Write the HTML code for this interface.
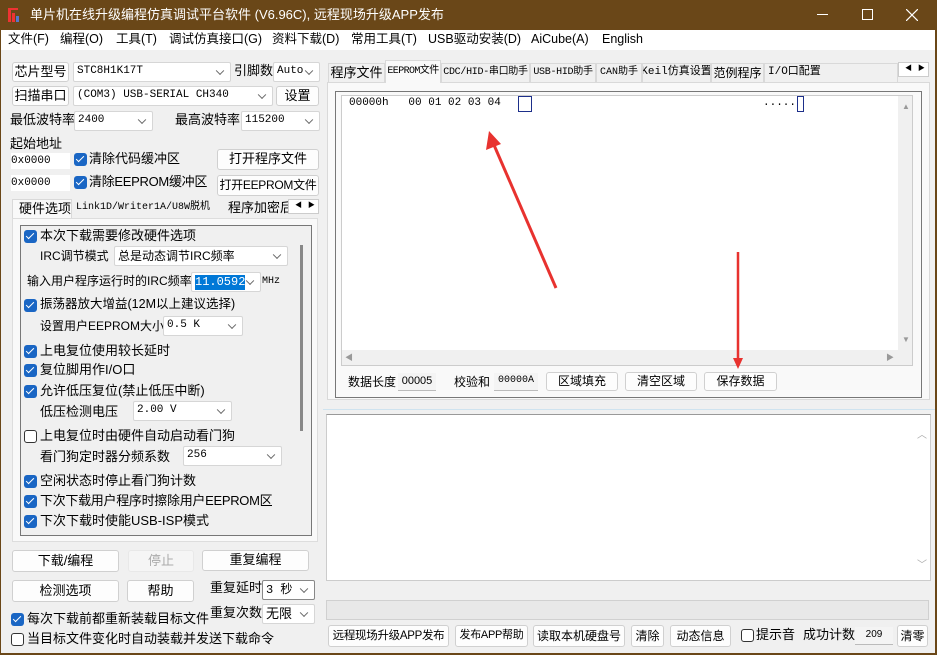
<!DOCTYPE html>
<html><head><meta charset="utf-8"><style>
*{box-sizing:border-box;margin:0;padding:0;white-space:nowrap}
body{width:937px;height:655px;overflow:hidden;background:#f0f0f0;font-family:"Liberation Sans","Noto Sans CJK SC",sans-serif;font-size:12px;line-height:1.25;color:#000;position:relative}
.a{position:absolute}
.btn{position:absolute;background:#fdfdfd;border:1px solid #d0d0d0;border-radius:3px;font-size:12px;display:flex;align-items:center;justify-content:center;overflow:hidden}
.cb{position:absolute;background:#fff;border:1px solid #d6d6d6;border-radius:2px;font-family:"Liberation Mono","Noto Sans CJK SC",monospace;font-size:11px;padding-left:3px;display:flex;align-items:center}
.cb:after{content:"";position:absolute;right:7px;top:50%;width:5px;height:5px;border-right:1px solid #666;border-bottom:1px solid #666;transform:translateY(-70%) rotate(45deg)}
.ck{position:absolute;width:13px;height:13px;background:#1a66c4;border-radius:3px}
.ck:after{content:"";position:absolute;left:4px;top:1px;width:3px;height:7px;border-right:1.5px solid #fff;border-bottom:1.5px solid #fff;transform:rotate(45deg)}
.uck{position:absolute;width:13px;height:13px;border:1px solid #333;border-radius:3px;background:#fff}
.tab{position:absolute;top:63px;height:19px;border:1px solid #d9d9d9;border-bottom:none;background:#f0f0f0;font-size:10px;display:flex;align-items:center;justify-content:center;font-family:"Liberation Mono","Noto Sans CJK SC",monospace;overflow:hidden}
.fld{position:absolute;background:#f4f4f4;border-bottom:1px solid #bbb;font-size:11px;display:flex;align-items:center;justify-content:center}
.m{position:absolute;top:32px;font-size:12.5px}
</style></head><body>
<div class="a" style="left:0;top:0;width:937px;height:30px;background:#6a4718"></div>
<svg class="a" style="left:8px;top:8px" width="14" height="14"><rect x="0" y="2" width="3" height="12" fill="#e33"/><rect x="4" y="5" width="3" height="9" fill="#e33"/><rect x="8" y="8" width="3" height="6" fill="#5577cc"/><rect x="0" y="0" width="10" height="2" fill="#e33"/></svg>
<div class="a" style="left:30px;top:7px;color:#fff;font-size:13px">单片机在线升级编程仿真调试平台软件 (V6.96C), 远程现场升级APP发布</div>
<div class="a" style="left:817px;top:14px;width:11px;height:1px;background:#fff"></div>
<div class="a" style="left:862px;top:9px;width:11px;height:11px;border:1px solid #fff"></div>
<svg class="a" style="left:906px;top:9px" width="12" height="12"><path d="M0 0L12 12M12 0L0 12" stroke="#fff" stroke-width="1.2"/></svg>
<div class="a" style="left:0;top:30px;width:1px;height:625px;background:#6a4718"></div>
<div class="a" style="left:935px;top:30px;width:2px;height:625px;background:#6a4718"></div>
<div class="a" style="left:0;top:653px;width:937px;height:2px;background:#6a4718"></div>
<div class="a" style="left:1px;top:30px;width:934px;height:20px;background:#fff"></div>
<div class="m" style="left:8px">文件(F)</div>
<div class="m" style="left:60px">编程(O)</div>
<div class="m" style="left:116px">工具(T)</div>
<div class="m" style="left:169px">调试仿真接口(G)</div>
<div class="m" style="left:272px">资料下载(D)</div>
<div class="m" style="left:351px">常用工具(T)</div>
<div class="m" style="left:428px">USB驱动安装(D)</div>
<div class="m" style="left:531px">AiCube(A)</div>
<div class="m" style="left:602px">English</div>

<div class="btn" style="left:12px;top:62px;width:57px;height:20px;font-size:13px">芯片型号</div>
<div class="cb" style="left:73px;top:62px;width:158px;height:20px">STC8H1K17T</div>
<div class="a" style="left:234px;top:63px;font-size:13px">引脚数</div>
<div class="cb" style="left:273px;top:62px;width:47px;height:20px">Auto</div>
<div class="btn" style="left:12px;top:86px;width:57px;height:20px;font-size:13px">扫描串口</div>
<div class="cb" style="left:73px;top:86px;width:200px;height:20px">(COM3) USB-SERIAL CH340</div>
<div class="btn" style="left:276px;top:86px;width:43px;height:20px;font-size:13px">设置</div>
<div class="a" style="left:10px;top:112px;font-size:13px">最低波特率</div>
<div class="cb" style="left:74px;top:111px;width:79px;height:20px">2400</div>
<div class="a" style="left:175px;top:112px;font-size:13px">最高波特率</div>
<div class="cb" style="left:241px;top:111px;width:79px;height:20px">115200</div>
<div class="a" style="left:10px;top:136px;font-size:13px">起始地址</div>
<div class="a" style="left:11px;top:153px;width:59px;height:16px;background:#fff;font-family:'Liberation Mono',monospace;font-size:11px;line-height:16px">0x0000</div>
<div class="ck" style="left:74px;top:153px"></div>
<div class="a" style="left:89px;top:151px;font-size:13px">清除代码缓冲区</div>
<div class="btn" style="left:217px;top:149px;width:102px;height:21px;font-size:13px">打开程序文件</div>
<div class="a" style="left:11px;top:175px;width:59px;height:16px;background:#fff;font-family:'Liberation Mono',monospace;font-size:11px;line-height:16px">0x0000</div>
<div class="ck" style="left:74px;top:176px"></div>
<div class="a" style="left:89px;top:174px;font-size:13px;letter-spacing:-0.3px">清除EEPROM缓冲区</div>
<div class="btn" style="left:217px;top:175px;width:102px;height:21px;font-size:12px;letter-spacing:-0.3px">打开EEPROM文件</div>
<div class="a" style="left:12px;top:199px;width:60px;height:20px;background:#f9f9f9;border:1px solid #d9d9d9;border-bottom:none;font-size:13px;padding:1px 0 0 6px">硬件选项</div>
<div class="a" style="left:76px;top:202px;font-family:'Liberation Mono','Noto Sans CJK SC',monospace;font-size:10px">Link1D/Writer1A/U8W脱机</div>
<div class="a" style="left:228px;top:200px;font-size:13px;width:60px;overflow:hidden">程序加密后</div>
<div class="a" style="left:288px;top:199px;width:31px;height:15px;border:1px solid #ccc;background:#fff;font-size:7px;padding:2px 0 0 6px">◀ &nbsp; ▶</div>
<div class="a" style="left:12px;top:218px;width:306px;height:324px;border:1px solid #ddd;background:#f9f9f9"></div>
<div class="a" style="left:20px;top:225px;width:292px;height:311px;border:1px solid #777;background:#f0f0f0"></div>
<div class="a" style="left:300px;top:245px;width:3px;height:186px;background:#888"></div>
<div class="ck" style="left:24px;top:230px"></div><div class="a" style="left:40px;top:228px;font-size:13px">本次下载需要修改硬件选项</div>
<div class="a" style="left:40px;top:249px;font-size:12px">IRC调节模式</div>
<div class="cb" style="left:114px;top:246px;width:174px;height:20px;font-size:12px;font-family:'Liberation Sans','Noto Sans CJK SC',sans-serif">总是动态调节IRC频率</div>
<div class="a" style="left:27px;top:274px;font-size:12px">输入用户程序运行时的IRC频率</div>
<div class="cb" style="left:191px;top:272px;width:70px;height:20px"><span style="background:#0078d7;color:#fff;font-size:12px">11.0592</span></div>
<div class="a" style="left:262px;top:276px;font-size:10px;font-family:'Liberation Mono',monospace">MHz</div>
<div class="ck" style="left:24px;top:299px"></div><div class="a" style="left:40px;top:297px;font-size:12.5px">振荡器放大增益(12M以上建议选择)</div>
<div class="a" style="left:40px;top:319px;font-size:12px">设置用户EEPROM大小</div>
<div class="cb" style="left:163px;top:316px;width:80px;height:20px">0.5 K</div>
<div class="ck" style="left:24px;top:345px"></div><div class="a" style="left:40px;top:343px;font-size:13px">上电复位使用较长延时</div>
<div class="ck" style="left:24px;top:364px"></div><div class="a" style="left:40px;top:362px;font-size:13px">复位脚用作I/O口</div>
<div class="ck" style="left:24px;top:385px"></div><div class="a" style="left:40px;top:383px;font-size:13px">允许低压复位(禁止低压中断)</div>
<div class="a" style="left:40px;top:404px;font-size:13px">低压检测电压</div>
<div class="cb" style="left:133px;top:401px;width:99px;height:20px">2.00 V</div>
<div class="uck" style="left:24px;top:430px"></div><div class="a" style="left:40px;top:428px;font-size:13px">上电复位时由硬件自动启动看门狗</div>
<div class="a" style="left:40px;top:449px;font-size:13px">看门狗定时器分频系数</div>
<div class="cb" style="left:183px;top:446px;width:99px;height:20px">256</div>
<div class="ck" style="left:24px;top:475px"></div><div class="a" style="left:40px;top:473px;font-size:13px">空闲状态时停止看门狗计数</div>
<div class="ck" style="left:24px;top:495px"></div><div class="a" style="left:40px;top:493px;font-size:13px;letter-spacing:-0.3px">下次下载用户程序时擦除用户EEPROM区</div>
<div class="ck" style="left:24px;top:515px"></div><div class="a" style="left:40px;top:513px;font-size:13px">下次下载时使能USB-ISP模式</div>
<div class="btn" style="left:12px;top:550px;width:107px;height:22px;font-size:13px">下载/编程</div>
<div class="btn" style="left:128px;top:550px;width:66px;height:22px;background:#f5f5f5;border-color:#e8e8e8;color:#aaa;font-size:13px">停止</div>
<div class="btn" style="left:202px;top:550px;width:107px;height:21px;font-size:13px">重复编程</div>
<div class="btn" style="left:12px;top:580px;width:107px;height:22px;font-size:13px">检测选项</div>
<div class="btn" style="left:127px;top:580px;width:67px;height:22px;font-size:13px">帮助</div>
<div class="a" style="left:210px;top:580px;font-size:13px">重复延时</div>
<div class="cb" style="left:262px;top:580px;width:53px;height:20px;border-color:#888;font-size:12px">3 秒</div>
<div class="ck" style="left:11px;top:613px"></div><div class="a" style="left:27px;top:611px;font-size:13px">每次下载前都重新装载目标文件</div>
<div class="a" style="left:210px;top:605px;font-size:13px">重复次数</div>
<div class="cb" style="left:262px;top:604px;width:53px;height:20px;font-family:'Liberation Sans','Noto Sans CJK SC',sans-serif;font-size:13px">无限</div>
<div class="uck" style="left:11px;top:633px"></div><div class="a" style="left:27px;top:631px;font-size:13px">当目标文件变化时自动装载并发送下载命令</div>

<div class="a" style="left:327px;top:82px;width:603px;height:318px;border:1px solid #d9d9d9;background:#f9f9f9"></div>
<div class="tab" style="left:328px;width:57px;font-family:'Liberation Sans','Noto Sans CJK SC',sans-serif;font-size:13px">程序文件</div>
<div class="tab" style="left:385px;top:60px;height:23px;width:56px;background:#f9f9f9;letter-spacing:-0.6px">EEPROM文件</div>
<div class="tab" style="left:441px;width:89px;letter-spacing:-0.3px">CDC/HID-串口助手</div>
<div class="tab" style="left:530px;width:66px;letter-spacing:-0.3px">USB-HID助手</div>
<div class="tab" style="left:596px;width:46px">CAN助手</div>
<div class="tab" style="left:642px;width:69px;font-size:11px">Keil仿真设置</div>
<div class="tab" style="left:711px;width:53px;font-family:'Liberation Sans','Noto Sans CJK SC',sans-serif;font-size:12px">范例程序</div>
<div class="tab" style="left:764px;width:134px;font-size:11px;justify-content:flex-start;padding-left:3px">I/O口配置</div>
<div class="a" style="left:898px;top:62px;width:31px;height:15px;border:1px solid #ccc;background:#fff;font-size:7px;padding:2px 0 0 6px">◀ &nbsp; ▶</div>
<div class="a" style="left:335px;top:91px;width:587px;height:307px;border:1px solid #777"></div>
<div class="a" style="left:341px;top:95px;width:572px;height:271px;border:1px solid #ccc;background:#f0f0f0"></div>
<div class="a" style="left:342px;top:96px;width:556px;height:254px;background:#fff"></div>
<div class="a" style="left:349px;top:97px;font-family:'Liberation Mono',monospace;font-size:11px">00000h &nbsp; 00 01 02 03 04</div>
<div class="a" style="left:518px;top:96px;width:14px;height:16px;border:1px solid #1d2f8a"></div>
<div class="a" style="left:763px;top:97px;font-family:'Liberation Mono',monospace;font-size:11px">.....</div>
<div class="a" style="left:797px;top:96px;width:7px;height:16px;border:1px solid #1d2f8a"></div>
<div class="a" style="left:902px;top:102px;font-size:8px;color:#999">▲</div>
<div class="a" style="left:902px;top:335px;font-size:8px;color:#999">▼</div>
<div class="a" style="left:345px;top:353px;font-size:8px;color:#999">◀</div>
<div class="a" style="left:886px;top:353px;font-size:8px;color:#999">▶</div>
<div class="a" style="left:348px;top:375px;font-size:12px">数据长度</div>
<div class="fld" style="left:398px;top:373px;width:38px;height:18px">00005</div>
<div class="a" style="left:454px;top:375px;font-size:12px">校验和</div>
<div class="fld" style="left:494px;top:373px;width:44px;height:18px;font-family:'Liberation Mono',monospace;font-size:10px">00000A</div>
<div class="btn" style="left:546px;top:372px;width:72px;height:19px">区域填充</div>
<div class="btn" style="left:625px;top:372px;width:72px;height:19px">清空区域</div>
<div class="btn" style="left:704px;top:372px;width:73px;height:19px">保存数据</div>
<div class="a" style="left:323px;top:409px;width:612px;height:1px;background:#cfe3ef"></div>
<div class="a" style="left:326px;top:414px;width:605px;height:167px;border:1px solid #ccc;border-top-color:#999;background:#fff"></div>
<div class="a" style="left:917px;top:430px;font-size:10px;color:#aaa">︿</div>
<div class="a" style="left:917px;top:560px;font-size:10px;color:#aaa">﹀</div>
<div class="a" style="left:326px;top:600px;width:603px;height:20px;border:1px solid #d0d0d0;background:#e8e8e8"></div>
<div class="btn" style="left:328px;top:625px;width:121px;height:22px;font-size:11.5px;letter-spacing:-0.3px">远程现场升级APP发布</div>
<div class="btn" style="left:455px;top:625px;width:73px;height:22px;font-size:11px;letter-spacing:-0.3px">发布APP帮助</div>
<div class="btn" style="left:533px;top:625px;width:92px;height:22px">读取本机硬盘号</div>
<div class="btn" style="left:631px;top:625px;width:33px;height:22px">清除</div>
<div class="btn" style="left:670px;top:625px;width:61px;height:22px">动态信息</div>
<div class="uck" style="left:741px;top:629px"></div>
<div class="a" style="left:756px;top:627px;font-size:13px">提示音</div>
<div class="a" style="left:803px;top:627px;font-size:13px">成功计数</div>
<div class="fld" style="left:855px;top:627px;width:38px;height:18px;font-size:10px">209</div>
<div class="btn" style="left:897px;top:625px;width:31px;height:22px">清零</div>
<svg class="a" style="left:0;top:0" width="937" height="655">
<line x1="556" y1="288" x2="494" y2="145" stroke="#e8322f" stroke-width="3"/>
<polygon points="489,131 486,150 501,144" fill="#e8322f"/>
<line x1="738" y1="252" x2="738" y2="358" stroke="#e8322f" stroke-width="2.5"/>
<polygon points="733,358 743,358 738,369" fill="#e8322f"/>
</svg>
</body></html>
